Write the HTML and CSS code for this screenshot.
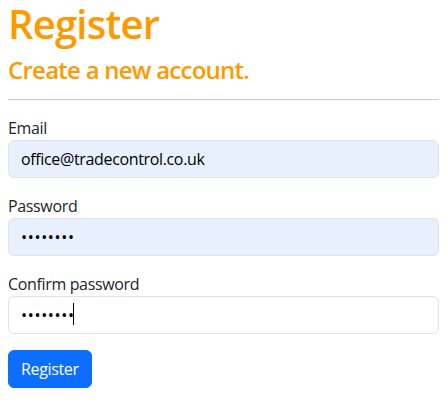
FILE: index.html
```html
<!DOCTYPE html>
<html lang="en">
<head>
<meta charset="utf-8">
<title>Register</title>
<link rel="stylesheet" href="styles.css">
</head>
<body>
<main class="page">
  <h1 class="title">Register</h1>
  <form class="register-form">
    <h2 class="subtitle">Create a new account.</h2>
    <hr class="divider">
    <div class="field">
      <label class="field-label" for="email">Email</label>
      <input class="field-input autofilled" id="email" type="email" value="office@tradecontrol.co.uk">
    </div>
    <div class="field">
      <label class="field-label" for="password">Password</label>
      <input class="field-input secret autofilled" id="password" type="password" value="password">
    </div>
    <div class="field">
      <label class="field-label" for="confirm">Confirm password</label>
      <div class="input-wrap">
        <input class="field-input secret" id="confirm" type="password" value="password">
        <span class="caret"></span>
      </div>
    </div>
    <button class="btn-primary" type="button">Register</button>
  </form>
</main>
</body>
</html>
```

FILE: styles.css
```css
* { box-sizing: border-box; }

html, body {
  margin: 0;
  padding: 0;
  background: #fff;
}

body {
  font-family: "Open Sans", "Noto Sans", sans-serif;
  font-size: 16px;
  line-height: 1.5;
  color: #212529;
  letter-spacing: -0.35px;
}

.page {
  padding: 0 8px;
}

.title {
  margin: 0;
  padding: 0 0 8px;
  font-size: 40px;
  line-height: 48px;
  font-weight: 600;
  letter-spacing: -0.8px;
  color: #ff9900;
}

.subtitle {
  margin: 0;
  font-size: 24px;
  line-height: 28.8px;
  font-weight: 600;
  letter-spacing: -0.75px;
  color: #ff9900;
}

.divider {
  margin: 14px 0 16px;
  border: 0;
  border-top: 1px solid #c8c9ca;
  height: 0;
}

.field {
  margin-bottom: 16px;
}

.field-label {
  display: block;
  height: 24px;
  line-height: 24px;
}

.input-wrap {
  position: relative;
}

.field-input {
  display: block;
  width: 100%;
  height: 38px;
  margin: 0;
  padding: 6px 12px;
  font-family: inherit;
  font-size: 16px;
  line-height: 24px;
  letter-spacing: -0.35px;
  color: #000;
  background: #fff;
  border: 1px solid #dee2e6;
  border-radius: 6px;
  outline: none;
}

.field-input.secret {
  letter-spacing: 0.7px;
}

.field-input.autofilled {
  background: #e8f0fe;
}

.caret {
  position: absolute;
  left: 65px;
  top: 7px;
  width: 1px;
  height: 22px;
  background: #000;
}

.btn-primary {
  display: inline-block;
  height: 38px;
  padding: 6px 12px;
  font-family: inherit;
  font-size: 16px;
  line-height: 24px;
  letter-spacing: -0.35px;
  color: #fff;
  background: #0d6efd;
  border: 1px solid #0d6efd;
  border-radius: 6px;
  cursor: pointer;
}
```
